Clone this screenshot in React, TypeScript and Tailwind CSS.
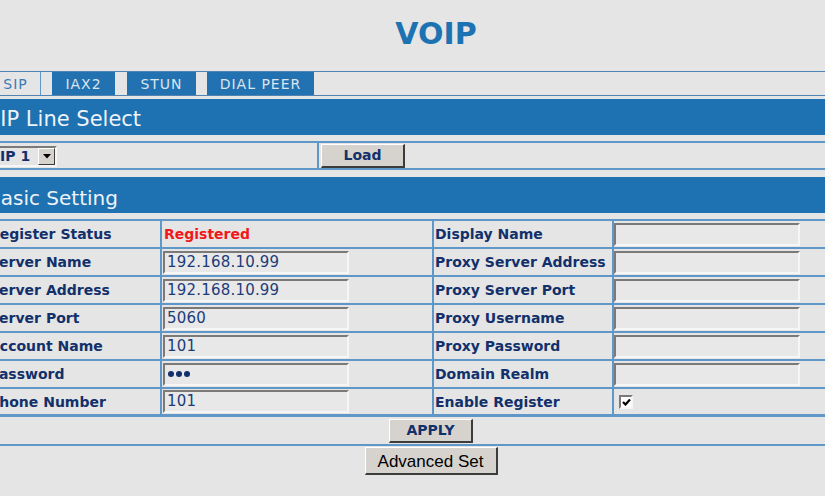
import React from "react";

const dv = "font-['DejaVu_Sans',Verdana,sans-serif]";
const label = `${dv} font-bold text-[14px] text-[#12306a] whitespace-nowrap`;
const line = "border-[#5f97c8]";

const TextBox = ({ value, dots }: { value?: string; dots?: boolean }) => (
  <div className="h-[23px] w-[186px] border-2 border-t-[#7c7a78] border-l-[#7c7a78] border-b-[#f6f6f6] border-r-[#f6f6f6] bg-[#e8e8e8] flex items-center pl-[2px]">
    {dots ? (
      <span className="flex gap-[2px] pl-[1px]">
        <span className="w-[6px] h-[6px] rounded-full bg-[#12306a]" />
        <span className="w-[6px] h-[6px] rounded-full bg-[#12306a]" />
        <span className="w-[6px] h-[6px] rounded-full bg-[#12306a]" />
      </span>
    ) : (
      <span className={`${dv} text-[15px] text-[#1c3c78] leading-none tracking-[0.2px]`}>{value}</span>
    )}
  </div>
);

const Btn = ({ children, className }: { children: React.ReactNode; className?: string }) => (
  <button className={`bg-[#d6d3ce] border border-t-white border-l-white border-b-2 border-r-2 border-b-[#3c3c3c] border-r-[#3c3c3c] flex items-center justify-center ${className ?? ""}`}>
    {children}
  </button>
);

const rows: [string, React.ReactNode, string, React.ReactNode][] = [
  ["Register Status", <span className={`${dv} font-bold text-[14px] text-[#f01818] pl-[1px]`}>Registered</span>, "Display Name", <TextBox />],
  ["Server Name", <TextBox value="192.168.10.99" />, "Proxy Server Address", <TextBox />],
  ["Server Address", <TextBox value="192.168.10.99" />, "Proxy Server Port", <TextBox />],
  ["Server Port", <TextBox value="5060" />, "Proxy Username", <TextBox />],
  ["Account Name", <TextBox value="101" />, "Proxy Password", <TextBox />],
  ["Password", <TextBox dots />, "Domain Realm", <TextBox />],
  [
    "Phone Number",
    <TextBox value="101" />,
    "Enable Register",
    <div className="ml-[5px] w-[14px] h-[14px] border-2 border-t-[#7c7a78] border-l-[#7c7a78] border-b-[#f6f6f6] border-r-[#f6f6f6] bg-white flex items-center justify-center">
      <svg width="9" height="8" viewBox="0 0 9 8">
        <path d="M1 4 L3.5 6.5 L8 1.5" stroke="#000" strokeWidth="2.2" fill="none" />
      </svg>
    </div>,
  ],
];

const tabs = [
  { name: "IAX2", w: "w-[63px]" },
  { name: "STUN", w: "w-[69px]" },
  { name: "DIAL PEER", w: "w-[107px]" },
];

export default function App() {
  return (
    <div className="w-[825px] h-[496px] overflow-hidden bg-[#e5e5e5]">
      <div className="ml-[-15px] w-[892px]">
        {/* header */}
        <div className="h-[71px] flex items-center justify-center pl-[10px] pb-[4px]">
          <h1 className={`${dv} font-bold text-[30px] text-[#1d72b2] leading-none`}>VOIP</h1>
        </div>

        {/* tabs */}
        <div className="h-[25px] border-t border-b border-[#4f83b4] flex gap-[11px]">
          <div className={`ml-[5px] w-[51px] border-l border-r ${line} flex items-center justify-center pt-[2px] ${dv} text-[14px] tracking-[1px] text-[#3b7bb5]`}>
            SIP
          </div>
          {tabs.map((t, i) => (
            <div
              key={t.name}
              className={`${t.w} ${i === 1 ? "ml-[1px]" : ""} bg-[#2271b1] flex items-center justify-center pt-[2px] ${dv} text-[14px] tracking-[1px] text-[#dbe5ee]`}
            >
              {t.name}
            </div>
          ))}
        </div>

        {/* SIP line select */}
        <div className={`mt-[3px] h-[36px] bg-[#1e72b2] flex items-center pl-[2px] pt-[5px] ${dv} text-[21px] text-[#eef3f8]`}>
          SIP Line Select
        </div>
        <div className={`mt-[6px] h-[29px] border-t-2 border-b-2 ${line} flex`}>
          <div className={`w-[334px] border-r-2 ${line} flex items-center pl-[2px]`}>
            <div className="h-[21px] w-[70px] mt-[1px] border-2 border-t-[#7c7a78] border-l-[#7c7a78] border-b-[#f6f6f6] border-r-[#f6f6f6] flex items-center justify-between">
              <span className={`${label} pl-[1px] leading-none`}>SIP 1</span>
              <span className="w-[17px] h-[17px] bg-[#d6d3ce] border border-t-white border-l-white border-b-[#3c3c3c] border-r-[#3c3c3c] flex items-center justify-center">
                <svg width="8" height="5" viewBox="0 0 8 5">
                  <path d="M0 0 H8 L4 4.5 Z" fill="#000" />
                </svg>
              </span>
            </div>
          </div>
          <div className="flex items-center pl-[2px]">
            <Btn className="w-[84px] h-[24px] mt-[1px]">
              <span className={label}>Load</span>
            </Btn>
          </div>
        </div>

        {/* basic setting */}
        <div className={`mt-[7px] h-[36px] bg-[#1e72b2] flex items-center pl-[2px] pt-[5px] ${dv} text-[20px] text-[#eef3f8]`}>
          Basic Setting
        </div>
        <div className={`mt-[6px] border-t-2 ${line}`}>
          {rows.map(([l1, v1, l2, v2], i) => (
            <div
              key={l1}
              className={`h-[28px] grid grid-cols-[177px_272px_180px_263px] ${i === rows.length - 1 ? "border-b-[3px]" : "border-b-2"} ${line}`}
            >
              <div className={`border-r-2 ${line} flex items-center pl-[4px] pt-[1px] ${label}`}>{l1}</div>
              <div className={`border-r-2 ${line} flex items-center pl-[1px]`}>{v1}</div>
              <div className={`border-r-2 ${line} flex items-center pl-[1px] pt-[1px] ${label}`}>{l2}</div>
              <div className="flex items-center">{v2}</div>
            </div>
          ))}
        </div>

        {/* actions */}
        <div className={`h-[29px] border-b-2 ${line} flex items-center justify-center`}>
          <Btn className="w-[84px] h-[24px]">
            <span className={`${label} pt-[1px]`}>APPLY</span>
          </Btn>
        </div>
        <div className="mt-[1px] flex justify-center">
          <Btn className="w-[133px] h-[28px]">
            <span className="font-['Liberation_Sans',Arial,sans-serif] text-[17px] text-black leading-none pt-[1px]">Advanced Set</span>
          </Btn>
        </div>
      </div>
    </div>
  );
}
